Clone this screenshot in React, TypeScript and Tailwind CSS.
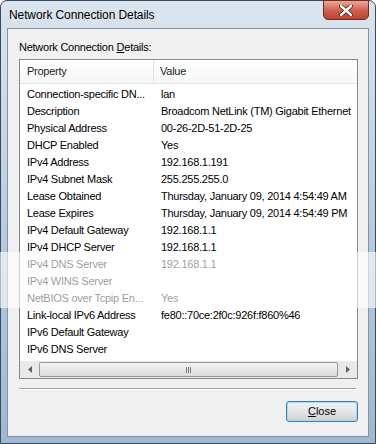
const rows: [string, string][] = [
  ['Connection-specific DN...', 'lan'],
  ['Description', 'Broadcom NetLink (TM) Gigabit Ethernet'],
  ['Physical Address', '00-26-2D-51-2D-25'],
  ['DHCP Enabled', 'Yes'],
  ['IPv4 Address', '192.168.1.191'],
  ['IPv4 Subnet Mask', '255.255.255.0'],
  ['Lease Obtained', 'Thursday, January 09, 2014 4:54:49 AM'],
  ['Lease Expires', 'Thursday, January 09, 2014 4:54:49 PM'],
  ['IPv4 Default Gateway', '192.168.1.1'],
  ['IPv4 DHCP Server', '192.168.1.1'],
  ['IPv4 DNS Server', '192.168.1.1'],
  ['IPv4 WINS Server', ''],
  ['NetBIOS over Tcpip En...', 'Yes'],
  ['Link-local IPv6 Address', 'fe80::70ce:2f0c:926f:f860%46'],
  ['IPv6 Default Gateway', ''],
  ['IPv6 DNS Server', ''],
]

function CloseX() {
  return (
    <svg width="14" height="11" viewBox="0 0 14 11">
      <path d="M2 1 L12 10 M12 1 L2 10" stroke="#4a1f1a" strokeWidth="4" strokeLinecap="round" />
      <path d="M2 1 L12 10 M12 1 L2 10" stroke="#ffffff" strokeWidth="2.4" strokeLinecap="round" />
    </svg>
  )
}

function Arrow({ dir }: { dir: 'left' | 'right' }) {
  return (
    <svg width="4" height="7" viewBox="0 0 4 7">
      {dir === 'left' ? <path d="M4 0 L0 3.5 L4 7 Z" fill="#606060" /> : <path d="M0 0 L4 3.5 L0 7 Z" fill="#606060" />}
    </svg>
  )
}

export default function App() {
  return (
    <div className="relative w-[376px] h-[444px] overflow-hidden bg-white font-['Liberation_Sans',Arial,sans-serif]">
      <div className="flex flex-col w-full h-full rounded-t-[7px] border border-[#3b4a5c] bg-gradient-to-b from-[#dbe5ef] via-[#b9cde0] to-[#9fb7d0] px-[6px] pb-[6px]">
        {/* title bar */}
        <div className="relative h-[27px] shrink-0 flex items-center pl-[2px]">
          <span className="text-[12px] text-black tracking-[-0.1px]">Network Connection Details</span>
          <div className="absolute -top-px right-[0px] w-[46px] h-[20px] rounded-b-[5px] border border-[#6b2c24] bg-gradient-to-b from-[#e9a99b] via-[#d0614f] to-[#c2402e] flex items-center justify-center">
            <CloseX />
          </div>
        </div>

        {/* client area */}
        <div className="flex-1 flex flex-col border border-[#8193a8] bg-[#f0f0f0] pl-[11px] pr-[10px]">
          <div className="h-[30px] flex items-end pb-[4px] text-[11px] text-black tracking-[-0.25px]">
            Network Connection <span className="underline ml-[3px]">D</span>etails:
          </div>

          {/* list view */}
          <div className="h-[320px] flex flex-col border border-[#828790] bg-white">
            <div className="h-[24px] flex text-[11px] text-[#1e1e1e] tracking-[-0.25px] bg-gradient-to-b from-white to-[#f5f6f7] border-b border-[#e3e5e8]">
              <div className="w-[134px] flex items-center pl-[7px] border-r border-[#dfe2e6]">Property</div>
              <div className="flex items-center pl-[6px]">Value</div>
            </div>
            <div className="flex-1 pt-[2px]">
              {rows.map(([p, v]) => (
                <div key={p} className="h-[17px] flex items-center text-[11px] text-black tracking-[-0.25px] whitespace-nowrap">
                  <div className="w-[134px] pl-[7px] shrink-0">{p}</div>
                  <div className="pl-[7px]">{v}</div>
                </div>
              ))}
            </div>
            {/* horizontal scrollbar */}
            <div className="h-[17px] flex items-center gap-[1px] bg-[#e9e9e9] px-[1px]">
              <div className="w-[17px] h-[15px] flex items-center justify-center">
                <Arrow dir="left" />
              </div>
              <div className="flex-1 h-[15px] flex items-center justify-center rounded-[2px] border border-[#979797] bg-gradient-to-b from-[#f3f3f3] to-[#dcdcdc]">
                <div className="flex gap-[1px]">
                  <span className="w-px h-[6px] bg-[#7b7b7b]" />
                  <span className="w-px h-[6px] bg-[#7b7b7b]" />
                  <span className="w-px h-[6px] bg-[#7b7b7b]" />
                </div>
              </div>
              <div className="w-[17px] h-[15px] flex items-center justify-center">
                <Arrow dir="right" />
              </div>
            </div>
          </div>

          <div className="mt-[9px] h-px bg-[#a0a0a0] border-b border-white box-content mr-[2px]" />

          <div className="flex justify-end mt-[11px]">
            <div className="w-[72px] h-[21px] flex items-center justify-center rounded-[3px] border border-[#3c7fb1] bg-gradient-to-b from-[#f2f2f2] via-[#e6e6e6] to-[#cfcfcf] text-[11px] text-black shadow-[inset_0_0_0_1px_#a7d9f4]">
              <span><span className="underline">C</span>lose</span>
            </div>
          </div>
        </div>
      </div>

      {/* washed-out band across the screenshot */}
      <div className="pointer-events-none absolute inset-x-0 top-[252px] h-[56px] bg-white/60" />
    </div>
  )
}
